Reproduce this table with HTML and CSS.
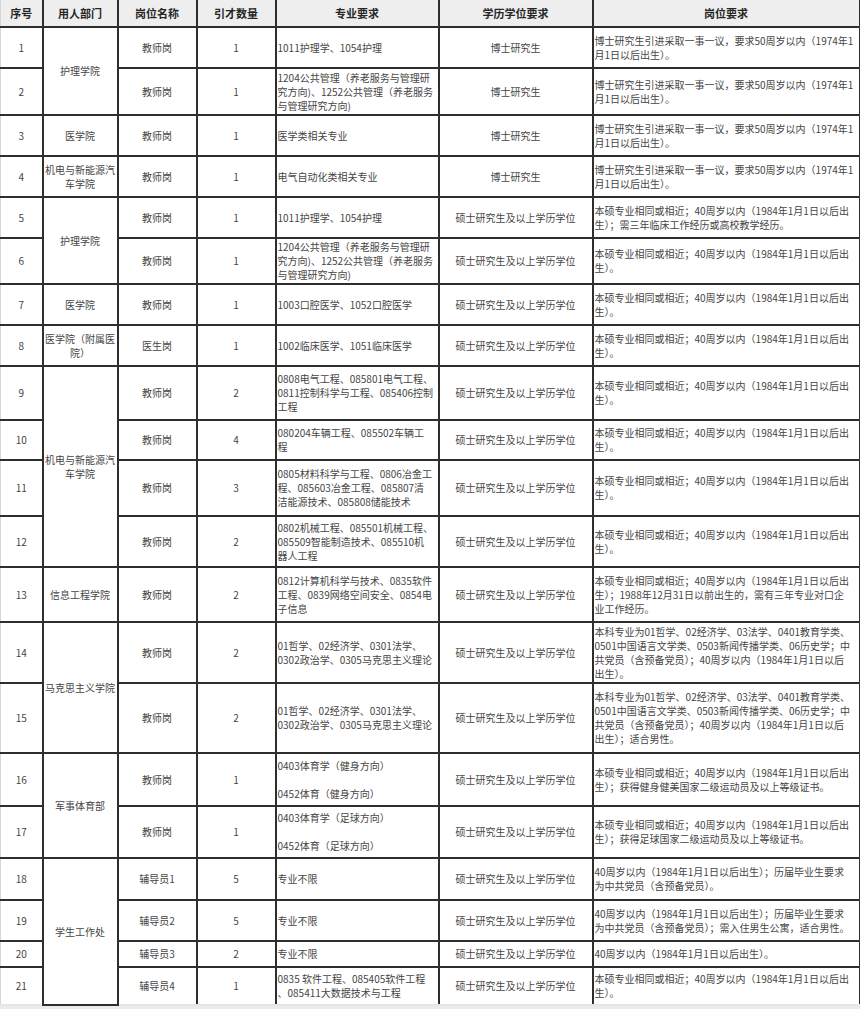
FILE: index.html
```html
<!DOCTYPE html>
<html lang="zh-CN">
<head>
<meta charset="utf-8">
<title>岗位需求表</title>
<link rel="stylesheet" href="styles.css">
</head>
<body>
<table class="jobs">
  <colgroup>
    <col class="c-no">
    <col class="c-dept">
    <col class="c-post">
    <col class="c-num">
    <col class="c-major">
    <col class="c-degree">
    <col class="c-req">
  </colgroup>
  <thead>
    <tr class="h27">
      <th>序号</th><th>用人部门</th><th>岗位名称</th><th>引才数量</th><th>专业要求</th><th>学历学位要求</th><th>岗位要求</th>
    </tr>
  </thead>
  <tbody>
    <tr class="h41">
      <td class="ctr">1</td><td class="ctr" rowspan="2">护理学院</td><td class="ctr">教师岗</td><td class="ctr">1</td>
      <td class="lft">1011护理学、1054护理</td><td class="ctr">博士研究生</td>
      <td class="lft">博士研究生引进采取一事一议，要求50周岁以内（1974年1<br>月1日以后出生）。</td>
    </tr>
    <tr class="h47">
      <td class="ctr">2</td><td class="ctr">教师岗</td><td class="ctr">1</td>
      <td class="lft">1204公共管理（养老服务与管理研<br>究方向)、1252公共管理（养老服务<br>与管理研究方向)</td><td class="ctr">博士研究生</td>
      <td class="lft">博士研究生引进采取一事一议，要求50周岁以内（1974年1<br>月1日以后出生）。</td>
    </tr>
    <tr class="h41">
      <td class="ctr">3</td><td class="ctr">医学院</td><td class="ctr">教师岗</td><td class="ctr">1</td>
      <td class="lft">医学类相关专业</td><td class="ctr">博士研究生</td>
      <td class="lft">博士研究生引进采取一事一议，要求50周岁以内（1974年1<br>月1日以后出生）。</td>
    </tr>
    <tr class="h41">
      <td class="ctr">4</td><td class="ctr">机电与新能源汽车学院</td><td class="ctr">教师岗</td><td class="ctr">1</td>
      <td class="lft">电气自动化类相关专业</td><td class="ctr">博士研究生</td>
      <td class="lft">博士研究生引进采取一事一议，要求50周岁以内（1974年1<br>月1日以后出生）。</td>
    </tr>
    <tr class="h41">
      <td class="ctr">5</td><td class="ctr" rowspan="2">护理学院</td><td class="ctr">教师岗</td><td class="ctr">1</td>
      <td class="lft">1011护理学、1054护理</td><td class="ctr">硕士研究生及以上学历学位</td>
      <td class="lft">本硕专业相同或相近；40周岁以内（1984年1月1日以后出<br>生）；需三年临床工作经历或高校教学经历。</td>
    </tr>
    <tr class="h46">
      <td class="ctr">6</td><td class="ctr">教师岗</td><td class="ctr">1</td>
      <td class="lft">1204公共管理（养老服务与管理研<br>究方向)、1252公共管理（养老服务<br>与管理研究方向)</td><td class="ctr">硕士研究生及以上学历学位</td>
      <td class="lft">本硕专业相同或相近；40周岁以内（1984年1月1日以后出<br>生）。</td>
    </tr>
    <tr class="h41">
      <td class="ctr">7</td><td class="ctr">医学院</td><td class="ctr">教师岗</td><td class="ctr">1</td>
      <td class="lft">1003口腔医学、1052口腔医学</td><td class="ctr">硕士研究生及以上学历学位</td>
      <td class="lft">本硕专业相同或相近；40周岁以内（1984年1月1日以后出<br>生）。</td>
    </tr>
    <tr class="h41">
      <td class="ctr">8</td><td class="ctr">医学院（附属医院）</td><td class="ctr">医生岗</td><td class="ctr">1</td>
      <td class="lft">1002临床医学、1051临床医学</td><td class="ctr">硕士研究生及以上学历学位</td>
      <td class="lft">本硕专业相同或相近；40周岁以内（1984年1月1日以后出<br>生）。</td>
    </tr>
    <tr class="h54">
      <td class="ctr">9</td><td class="ctr" rowspan="4">机电与新能源汽车学院</td><td class="ctr">教师岗</td><td class="ctr">2</td>
      <td class="lft">0808电气工程、085801电气工程、<br>0811控制科学与工程、085406控制<br>工程</td><td class="ctr">硕士研究生及以上学历学位</td>
      <td class="lft">本硕专业相同或相近；40周岁以内（1984年1月1日以后出<br>生）。</td>
    </tr>
    <tr class="h40">
      <td class="ctr">10</td><td class="ctr">教师岗</td><td class="ctr">4</td>
      <td class="lft">080204车辆工程、085502车辆工<br>程</td><td class="ctr">硕士研究生及以上学历学位</td>
      <td class="lft">本硕专业相同或相近；40周岁以内（1984年1月1日以后出<br>生）。</td>
    </tr>
    <tr class="h56">
      <td class="ctr">11</td><td class="ctr">教师岗</td><td class="ctr">3</td>
      <td class="lft">0805材料科学与工程、0806冶金工<br>程、085603冶金工程、085807清<br>洁能源技术、085808储能技术</td><td class="ctr">硕士研究生及以上学历学位</td>
      <td class="lft">本硕专业相同或相近；40周岁以内（1984年1月1日以后出<br>生）。</td>
    </tr>
    <tr class="h51">
      <td class="ctr">12</td><td class="ctr">教师岗</td><td class="ctr">2</td>
      <td class="lft">0802机械工程、085501机械工程、<br>085509智能制造技术、085510机<br>器人工程</td><td class="ctr">硕士研究生及以上学历学位</td>
      <td class="lft">本硕专业相同或相近；40周岁以内（1984年1月1日以后出<br>生）。</td>
    </tr>
    <tr class="h55">
      <td class="ctr">13</td><td class="ctr">信息工程学院</td><td class="ctr">教师岗</td><td class="ctr">2</td>
      <td class="lft">0812计算机科学与技术、0835软件<br>工程、0839网络空间安全、0854电<br>子信息</td><td class="ctr">硕士研究生及以上学历学位</td>
      <td class="lft">本硕专业相同或相近；40周岁以内（1984年1月1日以后出<br>生）；1988年12月31日以前出生的，需有三年专业对口企<br>业工作经历。</td>
    </tr>
    <tr class="h61">
      <td class="ctr">14</td><td class="ctr" rowspan="2">马克思主义学院</td><td class="ctr">教师岗</td><td class="ctr">2</td>
      <td class="lft">01哲学、02经济学、0301法学、<br>0302政治学、0305马克思主义理论</td><td class="ctr">硕士研究生及以上学历学位</td>
      <td class="lft">本科专业为01哲学、02经济学、03法学、0401教育学类、<br>0501中国语言文学类、0503新闻传播学类、06历史学；中<br>共党员（含预备党员）；40周岁以内（1984年1月1日以后<br>出生）。</td>
    </tr>
    <tr class="h70">
      <td class="ctr">15</td><td class="ctr">教师岗</td><td class="ctr">2</td>
      <td class="lft">01哲学、02经济学、0301法学、<br>0302政治学、0305马克思主义理论</td><td class="ctr">硕士研究生及以上学历学位</td>
      <td class="lft">本科专业为01哲学、02经济学、03法学、0401教育学类、<br>0501中国语言文学类、0503新闻传播学类、06历史学；中<br>共党员（含预备党员）；40周岁以内（1984年1月1日以后<br>出生）；适合男性。</td>
    </tr>
    <tr class="h53">
      <td class="ctr">16</td><td class="ctr" rowspan="2">军事体育部</td><td class="ctr">教师岗</td><td class="ctr">1</td>
      <td class="lft gap">0403体育学（健身方向）<br><br>0452体育（健身方向）</td><td class="ctr">硕士研究生及以上学历学位</td>
      <td class="lft">本硕专业相同或相近；40周岁以内（1984年1月1日以后出<br>生）；获得健身健美国家二级运动员及以上等级证书。</td>
    </tr>
    <tr class="h52">
      <td class="ctr">17</td><td class="ctr">教师岗</td><td class="ctr">1</td>
      <td class="lft gap">0403体育学（足球方向）<br><br>0452体育（足球方向）</td><td class="ctr">硕士研究生及以上学历学位</td>
      <td class="lft">本硕专业相同或相近；40周岁以内（1984年1月1日以后出<br>生）；获得足球国家二级运动员及以上等级证书。</td>
    </tr>
    <tr class="h42">
      <td class="ctr">18</td><td class="ctr" rowspan="4">学生工作处</td><td class="ctr">辅导员1</td><td class="ctr">5</td>
      <td class="lft">专业不限</td><td class="ctr">硕士研究生及以上学历学位</td>
      <td class="lft">40周岁以内（1984年1月1日以后出生）；历届毕业生要求<br>为中共党员（含预备党员）。</td>
    </tr>
    <tr class="h41">
      <td class="ctr">19</td><td class="ctr">辅导员2</td><td class="ctr">5</td>
      <td class="lft">专业不限</td><td class="ctr">硕士研究生及以上学历学位</td>
      <td class="lft">40周岁以内（1984年1月1日以后出生）；历届毕业生要求<br>为中共党员（含预备党员）；需入住男生公寓，适合男性。</td>
    </tr>
    <tr class="h26">
      <td class="ctr">20</td><td class="ctr">辅导员3</td><td class="ctr">2</td>
      <td class="lft">专业不限</td><td class="ctr">硕士研究生及以上学历学位</td>
      <td class="lft">40周岁以内（1984年1月1日以后出生）。</td>
    </tr>
    <tr class="h38">
      <td class="ctr">21</td><td class="ctr">辅导员4</td><td class="ctr">1</td>
      <td class="lft">0835 软件工程、085405软件工程<br>、085411大数据技术与工程</td><td class="ctr">硕士研究生及以上学历学位</td>
      <td class="lft">本硕专业相同或相近；40周岁以内（1984年1月1日以后出<br>生）。</td>
    </tr>
  </tbody>
</table>
</body>
</html>
```

FILE: styles.css
```css
html, body {
  margin: 0;
  padding: 0;
  background: #ebebeb;
}

body {
  font-family: "Noto Sans CJK SC", "Noto Sans", sans-serif;
  font-size: 10px;
  color: #454545;
}

.jobs {
  border-collapse: collapse;
  table-layout: fixed;
  width: 859px;
  background: #fff;
  border-left: 1px solid #d6d6d6;
}

.c-no { width: 42px; }
.c-dept { width: 75px; }
.c-post { width: 79px; }
.c-num { width: 79px; }
.c-major { width: 163px; }
.c-degree { width: 154px; }
.c-req { width: 267px; }

.jobs th,
.jobs td {
  border: 2px solid #2e2e2e;
  vertical-align: middle;
  line-height: 14px;
}

.jobs th {
  padding: 0;
  background: #eeeeee;
  font-size: 11px;
  font-weight: bold;
  color: #262626;
  text-align: center;
  border-top: 0;
}

.jobs th:first-child,
.jobs td:first-child {
  border-left: 1px solid #d6d6d6;
}

.jobs tbody tr:last-child td {
  border-bottom: 2px solid #e6e6e6;
}

.ctr {
  text-align: center;
  padding: 0;
  word-break: break-all;
}

.lft {
  text-align: left;
  padding: 0 0 0 1px;
  white-space: nowrap;
  overflow: hidden;
}

.gap { line-height: 13px; }

.h26 { height: 26px; }
.h27 { height: 27px; }
.h38 { height: 38px; }
.h40 { height: 40px; }
.h41 { height: 41px; }
.h42 { height: 42px; }
.h46 { height: 46px; }
.h47 { height: 47px; }
.h51 { height: 51px; }
.h52 { height: 52px; }
.h53 { height: 53px; }
.h54 { height: 54px; }
.h55 { height: 55px; }
.h56 { height: 56px; }
.h61 { height: 61px; }
.h70 { height: 70px; }
```
